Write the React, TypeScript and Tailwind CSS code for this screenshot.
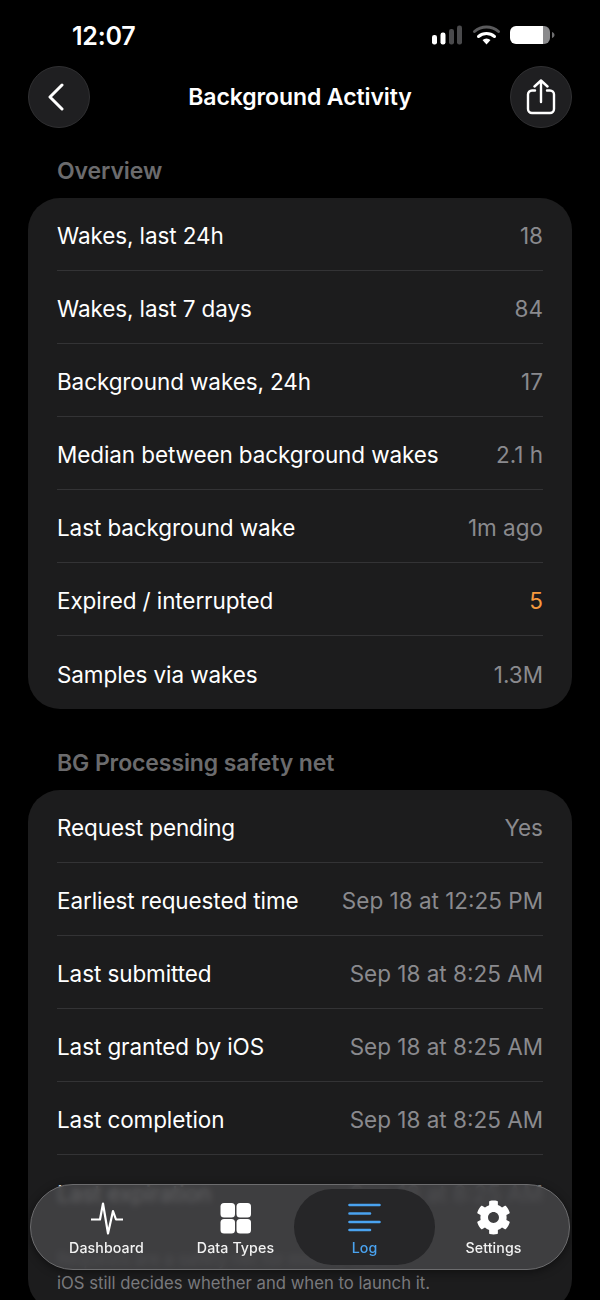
import { FaCog } from "react-icons/fa";

const font = { fontFamily: "Inter, 'Liberation Sans', sans-serif" };

function Row({ label, value, orange, last }: { label: string; value: string; orange?: boolean; last?: boolean }) {
  return (
    <div className={`flex h-[73px] items-center justify-between pt-[4px] ${last ? "" : "border-b border-[#333335]"}`}>
      <span className="text-[22.5px] tracking-[-0.1px] text-white">{label}</span>
      <span className={`text-[22.5px] ${orange ? "text-[#f79a3e]" : "text-[#8a8a8e]"}`}>{value}</span>
    </div>
  );
}

function Section({ title, children }: { title: string; children: React.ReactNode }) {
  return (
    <section>
      <h2 className="px-[57px] pb-[12px] text-[23px] leading-[30px] font-semibold tracking-[-0.1px] text-[#6b6b6d]">{title}</h2>
      {children}
    </section>
  );
}

function TabLabel({ children, blue }: { children: React.ReactNode; blue?: boolean }) {
  return <span className={`mt-[4px] text-[14.2px] leading-[18px] font-medium tracking-[0.1px] ${blue ? "text-[#4aa3f0]" : "text-[#f2f2f2]"}`}>{children}</span>;
}

export default function App() {
  return (
    <div style={font} className="relative h-[1300px] w-[600px] overflow-hidden bg-black">
      {/* status bar */}
      <div className="flex h-[66px] items-start justify-between pr-[45px] pl-[72px] pt-[20px]">
        <span className="text-[25px] leading-[32px] font-semibold tracking-[-0.2px] text-white">12:07</span>
        <svg width="123" height="22" viewBox="0 0 123 22" className="mt-[5px]">
          <rect x="0" y="10" width="5" height="9.5" rx="2.2" fill="#fff" />
          <rect x="8.5" y="7.5" width="5" height="12" rx="2.2" fill="#fff" />
          <rect x="17" y="4" width="5" height="15.5" rx="2.2" fill="#4a4a4c" />
          <rect x="25" y="0.5" width="5" height="19" rx="2.2" fill="#4a4a4c" />
          <path d="M42.5 7.5a18 18 0 0 1 24 0" fill="none" stroke="#5a5a5c" strokeWidth="3" strokeLinecap="round" transform="translate(0 -1)" />
          <path d="M46.5 11.5a12.5 12.5 0 0 1 16 0" fill="none" stroke="#fff" strokeWidth="3" strokeLinecap="round" />
          <path d="M50.5 15a6 6 0 0 1 8 0L54.5 19.5z" fill="#fff" />
          <path d="M84 1h27v18H84a6 6 0 0 1-6-6V7a6 6 0 0 1 6-6z" fill="#fff" />
          <path d="M111 1h1a6 6 0 0 1 6 6v6a6 6 0 0 1-6 6h-1z" fill="#8a8a8c" />
          <path d="M120 7c1.6.5 2.5 1.6 2.5 3s-.9 2.5-2.5 3z" fill="#6e6e70" />
        </svg>
      </div>

      {/* nav */}
      <div className="flex h-[62px] items-center justify-between px-[28px]">
        <button className="flex h-[62px] w-[62px] items-center justify-center rounded-full border border-[#303032] bg-[#1f1f21]">
          <svg width="20" height="30" viewBox="0 0 20 30" fill="none" stroke="#fff" strokeWidth="3" strokeLinecap="round" strokeLinejoin="round" className="-translate-x-[1px]">
            <path d="M14 3 2 15l12 12" />
          </svg>
        </button>
        <h1 className="text-[23px] font-semibold tracking-[-0.1px] text-white">Background Activity</h1>
        <button className="flex h-[62px] w-[62px] items-center justify-center rounded-full border border-[#303032] bg-[#1f1f21]">
          <svg width="30" height="36" viewBox="0 0 30 36" fill="none" stroke="#fff" strokeWidth="2.4" strokeLinecap="round" strokeLinejoin="round">
            <path d="M9 11.5H6a4 4 0 0 0-4 4V30a4 4 0 0 0 4 4h18a4 4 0 0 0 4-4V15.5a4 4 0 0 0-4-4h-3" />
            <path d="M15 23V1.5M8.5 7.5 15 1.5l6.5 6" />
          </svg>
        </button>
      </div>

      <div className="flex flex-col gap-[39px] pt-[28px]">
        <Section title="Overview">
          <div className="mx-[28px] rounded-[32px] bg-[#1c1c1d] px-[29px]">
            <Row label="Wakes, last 24h" value="18" />
            <Row label="Wakes, last 7 days" value="84" />
            <Row label="Background wakes, 24h" value="17" />
            <Row label="Median between background wakes" value="2.1 h" />
            <Row label="Last background wake" value="1m ago" />
            <Row label="Expired / interrupted" value="5" orange />
            <Row label="Samples via wakes" value="1.3M" last />
          </div>
        </Section>
        <Section title="BG Processing safety net">
          <div className="mx-[28px] rounded-[32px] bg-[#1c1c1d] px-[29px]">
            <Row label="Request pending" value="Yes" />
            <Row label="Earliest requested time" value="Sep 18 at 12:25 PM" />
            <Row label="Last submitted" value="Sep 18 at 8:25 AM" />
            <Row label="Last granted by iOS" value="Sep 18 at 8:25 AM" />
            <Row label="Last completion" value="Sep 18 at 8:25 AM" />
            <Row label="Last expiration" value="Sep 18 at 8:25 AM" last />
            <p className="pt-[19px] pb-[16px] text-[16.7px] leading-[24px] text-[#7a7a7d]">
              Requests are a safety net for missed wakes.
              <br />
              iOS still decides whether and when to launch it.
            </p>
          </div>
        </Section>
      </div>

      {/* floating tab bar */}
      <nav className="absolute top-[1184px] left-[30px] grid h-[86px] w-[540px] grid-cols-4 rounded-full border border-[#6c6c6e] bg-[#444446]/85 px-[11px] shadow-[0_2px_10px_rgba(0,0,0,0.45)] backdrop-blur-[3px]">
        <div className="flex flex-col items-center pt-[17px]">
          <svg width="32" height="33" viewBox="0 0 32 33" fill="none" stroke="#fff" strokeWidth="2.2" strokeLinecap="round" strokeLinejoin="round">
            <path d="M0.5 17.5H9L12 1.5 17 31.5 22 9l3 8.5h6.5" />
          </svg>
          <TabLabel>Dashboard</TabLabel>
        </div>
        <div className="flex flex-col items-center pt-[17px]">
          <svg width="31" height="33" viewBox="0 0 31 33">
            <rect x="0.5" y="1" width="14.5" height="14.5" rx="3.5" fill="#fff" />
            <rect x="16.5" y="1" width="14.5" height="14.5" rx="3.5" fill="#fff" />
            <rect x="0.5" y="17" width="14.5" height="14.5" rx="3.5" fill="#fff" />
            <rect x="16.5" y="17" width="14.5" height="14.5" rx="3.5" fill="#fff" />
          </svg>
          <TabLabel>Data Types</TabLabel>
        </div>
        <div className="flex justify-center">
          <div className="mt-[4px] flex h-[76px] w-[141px] shrink-0 flex-col items-center rounded-full bg-[#262628] pt-[13px]">
            <svg width="33" height="33" viewBox="0 0 33 33" stroke="#4aa3f0" strokeWidth="2.6" strokeLinecap="round">
              <path d="M1.5 3H31.5M1.5 11.5H22M1.5 20H31.5M1.5 28H22" />
            </svg>
            <TabLabel blue>Log</TabLabel>
          </div>
        </div>
        <div className="flex flex-col items-center pt-[15px]">
          <FaCog size={35} color="#fff" />
          <TabLabel>Settings</TabLabel>
        </div>
      </nav>
    </div>
  );
}
